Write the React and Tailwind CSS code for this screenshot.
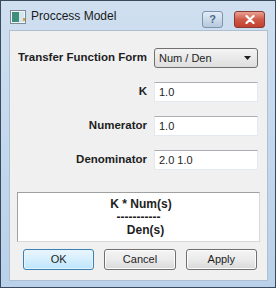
import React from 'react'

const font = { fontFamily: '"Liberation Sans", "DejaVu Sans", sans-serif' }

function Field({ label, children }) {
  return (
    <>
      <div className="flex h-[20px] items-center justify-end whitespace-nowrap text-[11.5px] font-bold text-[#1e1e1e]">{label}</div>
      {children}
    </>
  )
}

function TextBox({ value }) {
  return (
    <div className="flex h-[20px] items-center border border-[#e3e9ef] border-t-[#abadb3] bg-white px-[4px] text-[11px] text-[#1e1e1e]">
      {value}
    </div>
  )
}

function DlgButton({ label, primary }) {
  return (
    <button
      className={
        'h-[21px] flex-1 rounded-[3px] border text-[11px] text-[#1e1e1e] ' +
        (primary
          ? 'border-[#3c7fb1] bg-gradient-to-b from-[#eaf6fd] to-[#bee6fd] shadow-[inset_0_0_0_1px_#e6f4fc]'
          : 'border-[#707070] bg-gradient-to-b from-[#f4f4f4] via-[#ebebeb] to-[#d9d9d9] shadow-[inset_0_0_0_1px_#fcfcfc]')
      }
    >
      {label}
    </button>
  )
}

export default function App() {
  return (
    <div style={font} className="flex h-[288px] w-[276px] flex-col border border-[#3a4a5c] bg-gradient-to-b from-[#cfdff0] to-[#b9d1ea]">
      {/* title bar */}
      <div className="flex h-[29px] items-center pl-[9px] pr-[10px]">
        <svg width="16" height="14" viewBox="0 0 16 14" className="mr-[5px] mt-[2px]">
          <rect x="0.5" y="0.5" width="15" height="13" fill="#f4f4f4" stroke="#7a8a99" />
          <rect x="2" y="2" width="7" height="10" fill="#3e8f7a" />
          <rect x="9" y="2" width="5" height="10" fill="#d6e6ee" />
          <rect x="13" y="8" width="2" height="3" fill="#e0a030" />
        </svg>
        <span className="text-[12px] text-[#1a1a1a]">Proccess Model</span>
        <div className="ml-auto flex items-center gap-[11px] self-start pt-[10px]">
          <div className="flex h-[17px] w-[21px] items-center justify-center rounded-[3px] border border-[#7d93ad] bg-gradient-to-b from-[#e3ecf6] to-[#b6c9de] text-[11px] font-bold text-[#4d6a8c]">
            ?
          </div>
          <div className="flex h-[17px] w-[31px] items-center justify-center rounded-[3px] border border-[#8a3a30] bg-gradient-to-b from-[#e8a093] via-[#cf5a48] to-[#c2402e]">
            <svg width="10" height="9" viewBox="0 0 10 9">
              <path d="M1.5 1 L8.5 8 M8.5 1 L1.5 8" stroke="#fff" strokeWidth="2.2" strokeLinecap="round" />
            </svg>
          </div>
        </div>
      </div>

      {/* client area */}
      <div className="ml-[8px] mr-[7px] flex flex-1 flex-col border border-[#aebfd2] bg-[#f0f0f0]">
        <div className="grid grid-cols-[auto_104px] items-center justify-end gap-x-[7px] gap-y-[14px] pr-[9px] pt-[17px]">
          <Field label="Transfer Function Form">
            <div className="flex h-[20px] items-center justify-between rounded-[3px] border border-[#707070] bg-gradient-to-b from-[#f4f4f4] to-[#dedede] pl-[4px] pr-[6px] text-[11px] text-[#1e1e1e]">
              <span>Num / Den</span>
              <svg width="7" height="4" viewBox="0 0 7 4">
                <path d="M0 0 H7 L3.5 4 Z" fill="#1e1e1e" />
              </svg>
            </div>
          </Field>
          <Field label="K">
            <TextBox value="1.0" />
          </Field>
          <Field label="Numerator">
            <TextBox value="1.0" />
          </Field>
          <Field label="Denominator">
            <TextBox value="2.0 1.0" />
          </Field>
        </div>

        <div className="mx-[7px] mt-[22px] flex h-[50px] flex-col items-center justify-center border border-[#d8d8d8] border-l-[#a0a0a0] border-t-[#a0a0a0] bg-white pt-[1px] text-[12px] font-bold leading-[13px] text-[#1e1e1e]">
          <div className="whitespace-pre pl-[5px]">K * Num(s)</div>
          <div className="whitespace-pre">-----------</div>
          <div className="whitespace-pre pl-[14px]">Den(s)</div>
        </div>

        <div className="mt-[7px] flex gap-[10px] pl-[13px] pr-[10px]">
          <DlgButton label="OK" primary />
          <DlgButton label="Cancel" />
          <DlgButton label="Apply" />
        </div>
      </div>
      <div className="h-[6px]" />
    </div>
  )
}
